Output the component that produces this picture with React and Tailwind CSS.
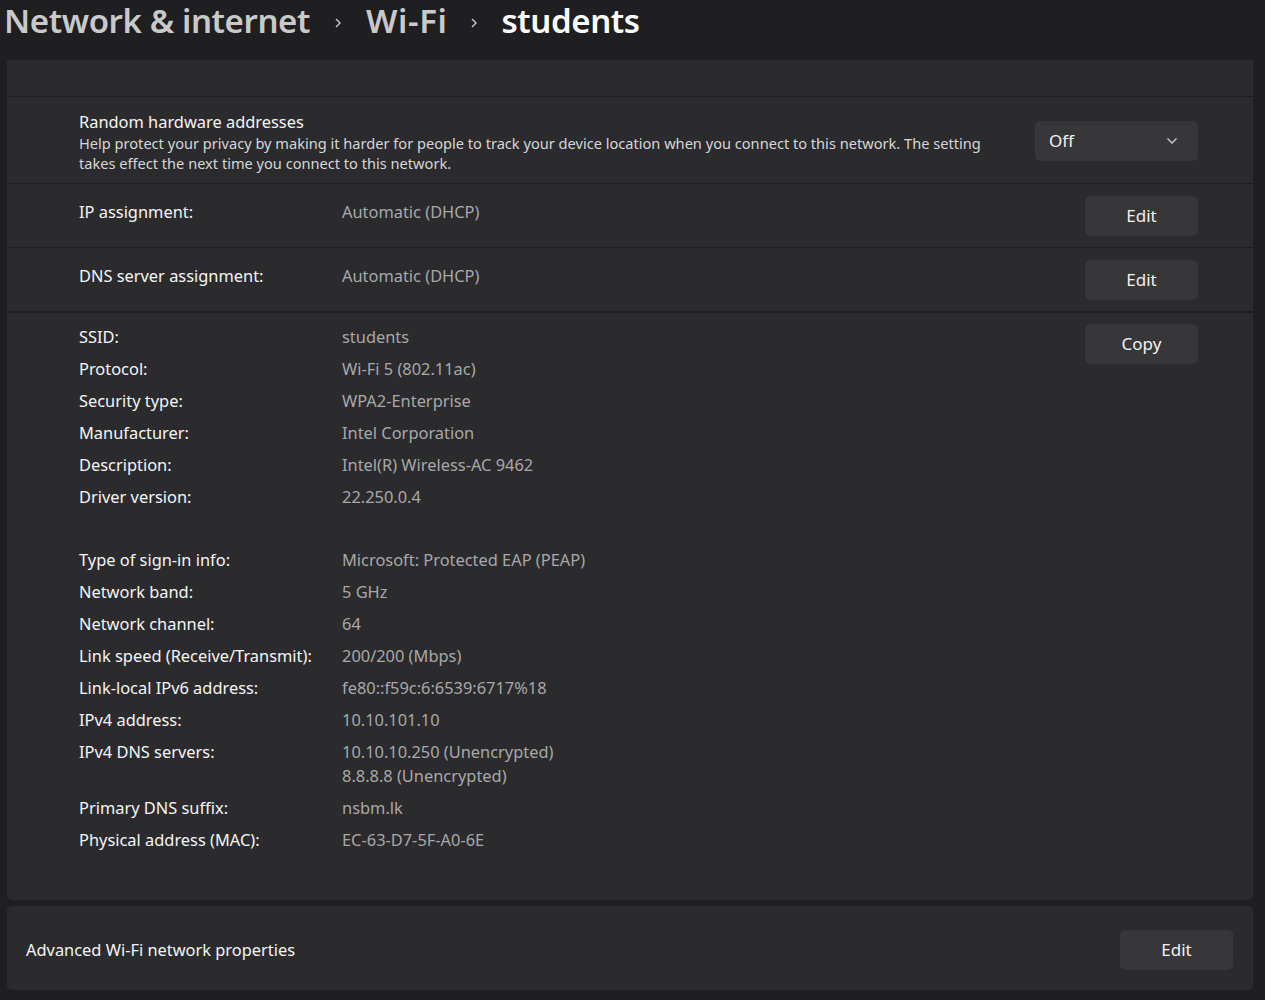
import React from "react";

const details1 = [
  ["SSID:", "students"],
  ["Protocol:", "Wi-Fi 5 (802.11ac)"],
  ["Security type:", "WPA2-Enterprise"],
  ["Manufacturer:", "Intel Corporation"],
  ["Description:", "Intel(R) Wireless-AC 9462"],
  ["Driver version:", "22.250.0.4"],
];

const details2 = [
  ["Type of sign-in info:", ["Microsoft: Protected EAP (PEAP)"]],
  ["Network band:", ["5 GHz"]],
  ["Network channel:", ["64"]],
  ["Link speed (Receive/Transmit):", ["200/200 (Mbps)"]],
  ["Link-local IPv6 address:", ["fe80::f59c:6:6539:6717%18"]],
  ["IPv4 address:", ["10.10.101.10"]],
  ["IPv4 DNS servers:", ["10.10.10.250 (Unencrypted)", "8.8.8.8 (Unencrypted)"]],
  ["Primary DNS suffix:", ["nsbm.lk"]],
  ["Physical address (MAC):", ["EC-63-D7-5F-A0-6E"]],
];

function Btn({ children, className = "" }) {
  return (
    <div
      className={
        "flex h-[40px] w-[113px] items-center justify-center rounded-[5px] bg-[#373739] text-[17px] text-[#f2f2f2] " +
        className
      }
    >
      {children}
    </div>
  );
}

function Chevron() {
  return (
    <svg width="8" height="12" viewBox="0 0 8 12" className="mt-[4px]">
      <path d="M2 2 L6 6 L2 10" fill="none" stroke="#c9c9c9" strokeWidth="1.4" />
    </svg>
  );
}

export default function App() {
  return (
    <div className="min-h-[1000px] w-[1265px] bg-[#1f1f22] font-['Noto_Sans',sans-serif] text-white">
      <div className="flex h-[60px] items-start pl-[4px] text-[33px] font-semibold leading-[42px] tracking-[-0.4px]">
        <span className="text-[#c9c9c9]">Network &amp; internet</span>
        <div className="flex h-[42px] w-[56px] items-center justify-center"><Chevron /></div>
        <span className="text-[#c9c9c9] tracking-[0.6px]">Wi-Fi</span>
        <div className="flex h-[42px] w-[54px] items-center justify-center"><Chevron /></div>
        <span className="text-white">students</span>
      </div>

      <div className="ml-[7px] w-[1246px] overflow-hidden rounded-b-[5px] text-[16.4px]">
        <div className="h-[36px] bg-[#2b2b2e]" />
        <div className="mt-[1px] flex h-[86px] items-center bg-[#2b2b2e] pl-[72px] pr-[55px]">
          <div className="flex-1 pt-[3px]">
            <div className="leading-[22px] text-[#f5f5f5]">Random hardware addresses</div>
            <div className="w-[925px] text-[14.6px] leading-[20px] text-[#d6d6d6]">
              Help protect your privacy by making it harder for people to track your device location when you connect to this network. The setting takes effect the next time you connect to this network.
            </div>
          </div>
          <div className="mt-[2px] flex h-[40px] w-[163px] items-center justify-between rounded-[5px] bg-[#373739] pl-[14px] pr-[20px] text-[17px] text-[#f2f2f2]">
            <span>Off</span>
            <svg width="12" height="8" viewBox="0 0 12 8">
              <path d="M1.5 1.5 L6 6 L10.5 1.5" fill="none" stroke="#d0d0d0" strokeWidth="1.3" />
            </svg>
          </div>
        </div>

        <div className="mt-[1px] flex h-[63px] items-center bg-[#2b2b2e] pl-[72px] pr-[55px]">
          <div className="mt-[-6px] w-[263px] text-[#f5f5f5]">IP assignment:</div>
          <div className="mt-[-6px] flex-1 text-[#a8a8a8]">Automatic (DHCP)</div>
          <Btn>Edit</Btn>
        </div>
        <div className="mt-[1px] flex h-[63px] items-center bg-[#2b2b2e] pl-[72px] pr-[55px]">
          <div className="mt-[-6px] w-[263px] text-[#f5f5f5]">DNS server assignment:</div>
          <div className="mt-[-6px] flex-1 text-[#a8a8a8]">Automatic (DHCP)</div>
          <Btn>Edit</Btn>
        </div>

        <div className="mt-[2px] flex h-[587px] bg-[#2b2b2e] pl-[72px] pr-[55px] pt-[12px]">
          <div className="flex-1 leading-[24px]">
            {details1.map(([k, v]) => (
              <div key={k} className="flex h-[32px]">
                <div className="w-[263px] text-[#f5f5f5]">{k}</div>
                <div className="text-[#a8a8a8]">{v}</div>
              </div>
            ))}
            <div className="h-[31px]" />
            {details2.map(([k, v]) => (
              <div key={k} className="flex min-h-[32px] pb-[8px]">
                <div className="w-[263px] text-[#f5f5f5]">{k}</div>
                <div className="text-[#a8a8a8]">
                  {v.map((l) => (
                    <div key={l}>{l}</div>
                  ))}
                </div>
              </div>
            ))}
          </div>
          <Btn className="mt-[-1px]">Copy</Btn>
        </div>
      </div>

      <div className="ml-[7px] mt-[6px] flex h-[84px] w-[1246px] items-center justify-between rounded-[5px] bg-[#2b2b2e] pl-[19px] pr-[20px]">
        <span className="mt-[5px] text-[16.4px] text-[#f5f5f5]">Advanced Wi-Fi network properties</span>
        <Btn className="mt-[3px]">Edit</Btn>
      </div>
    </div>
  );
}
